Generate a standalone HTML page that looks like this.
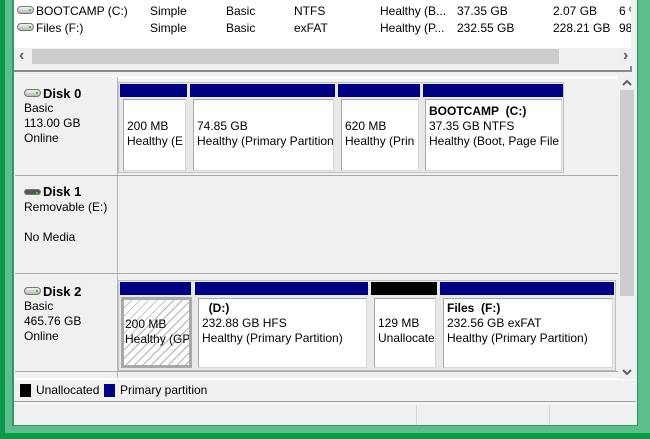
<!DOCTYPE html>
<html><head><meta charset="utf-8"><style>
*{margin:0;padding:0;box-sizing:border-box}
body{width:650px;height:439px;overflow:hidden;background:#5dbd8b;font-family:"Liberation Sans",sans-serif;font-size:12px;color:#000;position:relative}
.a{position:absolute}
.t{position:absolute;white-space:nowrap;line-height:15px}
.hdr{position:absolute;height:13px;background:#000080}
.box{position:absolute;background:#fff;border:1px solid #a8a8a8;border-right-color:#d8d8d8;border-bottom-color:#d8d8d8;overflow:hidden;padding:0 0 0 3px}
.box .l{line-height:15px;white-space:nowrap}
b{font-weight:bold}
.ic{display:inline-block;width:17px;height:8px;border:1px solid #777;border-radius:4px;background:linear-gradient(#f4f4f4,#b8b8b8);vertical-align:1px;margin-right:2px;position:relative}
.ic:after{content:"";position:absolute;right:2px;top:2px;width:2px;height:2px;background:#3c3}
.ar{position:absolute;color:#606060;font-size:16px;line-height:16px;font-weight:bold}
</style></head><body>
<div class="a" style="left:0;top:0;width:5px;height:439px;background:#0b9a4b"></div>
<div class="a" style="left:0;top:433px;width:650px;height:6px;background:#0b9a4b"></div>
<div class="a" style="left:12px;top:0;width:626px;height:426px;background:#2e9c62"></div>
<div class="a" style="left:14px;top:0;width:623px;height:425px;background:#f0f0f0"></div>
<div class="a" style="left:14px;top:0;width:617px;height:48px;background:#fff"></div>
<div class="t" style="left:17px;top:4px"><span class="ic"></span>BOOTCAMP (C:)</div>
<div class="t" style="left:17px;top:21px"><span class="ic"></span>Files (F:)</div>
<div class="t" style="left:150px;top:4px">Simple</div><div class="t" style="left:150px;top:21px">Simple</div>
<div class="t" style="left:226px;top:4px">Basic</div><div class="t" style="left:226px;top:21px">Basic</div>
<div class="t" style="left:294px;top:4px">NTFS</div><div class="t" style="left:294px;top:21px">exFAT</div>
<div class="t" style="left:380px;top:4px">Healthy (B...</div><div class="t" style="left:380px;top:21px">Healthy (P...</div>
<div class="t" style="left:457px;top:4px">37.35 GB</div><div class="t" style="left:457px;top:21px">232.55 GB</div>
<div class="t" style="left:553px;top:4px">2.07 GB</div><div class="t" style="left:553px;top:21px">228.21 GB</div>
<div class="t" style="left:619px;top:4px;width:12px;overflow:hidden">6 %</div><div class="t" style="left:619px;top:21px;width:12px;overflow:hidden">98</div>
<div class="a" style="left:14px;top:48px;width:617px;height:16px;background:#f0f0f0"></div>
<div class="a" style="left:32px;top:49px;width:527px;height:15px;background:#cdcdcd"></div>
<div class="ar" style="left:19px;top:48px">&#8249;</div>
<div class="ar" style="left:623px;top:48px">&#8250;</div>
<div class="a" style="left:14px;top:70px;width:617px;height:2px;background:#8a8a8a"></div>
<div class="a" style="left:630px;top:66px;width:2px;height:6px;background:#8a8a8a"></div>
<div class="a" style="left:14px;top:76px;width:604px;height:303px;background:#fff"></div>
<div class="a" style="left:15px;top:77px;width:603px;height:301px;background:#f0f0f0"></div>
<div class="a" style="left:117px;top:77px;width:1px;height:301px;background:#b8b8b8"></div>
<div class="a" style="left:15px;top:175px;width:603px;height:1px;background:#a8a8a8"></div>
<div class="a" style="left:15px;top:273px;width:603px;height:1px;background:#a8a8a8"></div>
<div class="a" style="left:15px;top:371px;width:603px;height:1px;background:#a8a8a8"></div>
<div class="a" style="left:118px;top:77px;width:500px;height:2px;background:#fff"></div>
<div class="t" style="left:24px;top:86px;font-size:13px"><span class="ic"></span><b>Disk 0</b></div>
<div class="t" style="left:24px;top:101px">Basic</div>
<div class="t" style="left:24px;top:116px">113.00 GB</div>
<div class="t" style="left:24px;top:131px">Online</div>
<div class="t" style="left:24px;top:184px;font-size:13px"><span class="ic" style="background:#555;height:6px"></span><b>Disk 1</b></div>
<div class="t" style="left:24px;top:200px">Removable (E:)</div>
<div class="t" style="left:24px;top:230px">No Media</div>
<div class="t" style="left:24px;top:284px;font-size:13px"><span class="ic"></span><b>Disk 2</b></div>
<div class="t" style="left:24px;top:299px">Basic</div>
<div class="t" style="left:24px;top:314px">465.76 GB</div>
<div class="t" style="left:24px;top:329px">Online</div>
<div class="a" style="left:118px;top:82px;width:446px;height:91px;background:#e8e8e8;border:1px solid #c0c0c0"></div>
<div class="hdr" style="left:120px;top:84px;width:67px"></div>
<div class="box" style="left:123px;top:99px;width:63px;height:72px"><div class="l" style="margin-top:19px">200 MB</div><div class="l">Healthy (E</div></div>
<div class="hdr" style="left:190px;top:84px;width:145px"></div>
<div class="box" style="left:193px;top:99px;width:141px;height:72px"><div class="l" style="margin-top:19px">74.85 GB</div><div class="l">Healthy (Primary Partition</div></div>
<div class="hdr" style="left:338px;top:84px;width:82px"></div>
<div class="box" style="left:341px;top:99px;width:78px;height:72px"><div class="l" style="margin-top:19px">620 MB</div><div class="l">Healthy (Prin</div></div>
<div class="hdr" style="left:423px;top:84px;width:140px"></div>
<div class="box" style="left:425px;top:99px;width:137px;height:72px"><div class="l" style="margin-top:4px"><b>BOOTCAMP&nbsp; (C:)</b></div><div class="l">37.35 GB NTFS</div><div class="l">Healthy (Boot, Page File</div></div>
<div class="a" style="left:118px;top:280px;width:498px;height:91px;background:#e8e8e8;border:1px solid #c0c0c0"></div>
<div class="hdr" style="left:120px;top:282px;width:71px"></div>
<div class="box" style="left:121px;top:297px;width:71px;height:71px;border:3px solid #a8a8a8;background:#fff repeating-linear-gradient(135deg,#fff 0,#fff 5px,#b0b0b0 5px,#b0b0b0 6px);padding-left:1px"><div class="l" style="margin-top:17px">200 MB</div><div class="l">Healthy (GP</div></div>
<div class="hdr" style="left:195px;top:282px;width:173px"></div>
<div class="box" style="left:198px;top:298px;width:169px;height:70px"><div class="l" style="margin-top:2px">&nbsp;&nbsp;<b>(D:)</b></div><div class="l">232.88 GB HFS</div><div class="l">Healthy (Primary Partition)</div></div>
<div class="hdr" style="left:371px;top:282px;width:66px;background:#000"></div>
<div class="box" style="left:374px;top:298px;width:62px;height:70px"><div class="l" style="margin-top:17px">129 MB</div><div class="l">Unallocate</div></div>
<div class="hdr" style="left:440px;top:282px;width:174px"></div>
<div class="box" style="left:443px;top:298px;width:170px;height:70px"><div class="l" style="margin-top:2px"><b>Files&nbsp; (F:)</b></div><div class="l">232.56 GB exFAT</div><div class="l">Healthy (Primary Partition)</div></div>
<div class="a" style="left:618px;top:76px;width:17px;height:303px;background:#f0f0f0"></div>
<div class="a" style="left:620px;top:90px;width:14px;height:206px;background:#cdcdcd"></div>
<svg class="a" style="left:620px;top:78px" width="14" height="10"><path d="M3 7 L7 3 L11 7" stroke="#606060" stroke-width="2" fill="none"/></svg>
<svg class="a" style="left:620px;top:367px" width="14" height="10"><path d="M3 3 L7 7 L11 3" stroke="#606060" stroke-width="2" fill="none"/></svg>
<div class="a" style="left:14px;top:379px;width:622px;height:1px;background:#fff"></div>
<div class="a" style="left:20px;top:384px;width:11px;height:13px;background:#000"></div>
<div class="t" style="left:36px;top:383px">Unallocated</div>
<div class="a" style="left:104px;top:384px;width:11px;height:13px;background:#000080"></div>
<div class="t" style="left:120px;top:383px">Primary partition</div>
<div class="a" style="left:14px;top:401px;width:622px;height:1px;background:#a0a0a0"></div>
<div class="a" style="left:14px;top:403px;width:623px;height:1px;background:#fff"></div>
<div class="a" style="left:416px;top:405px;width:1px;height:20px;background:#d4d4d4"></div>
<div class="a" style="left:549px;top:405px;width:1px;height:20px;background:#d4d4d4"></div>
</body></html>
